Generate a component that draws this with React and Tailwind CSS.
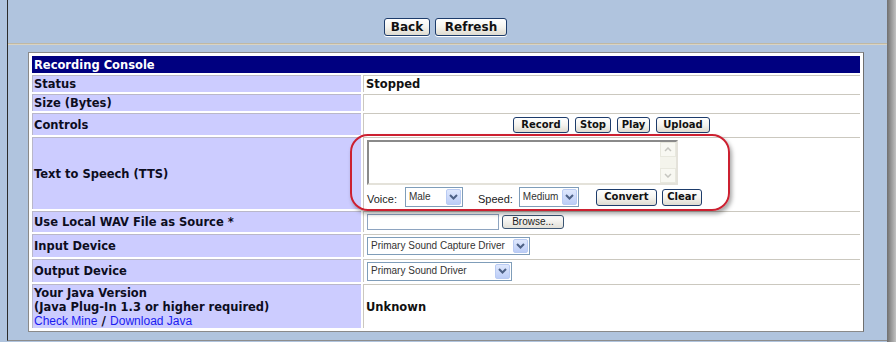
import React from "react";

const verdana = "font-['DejaVu_Sans',Verdana,sans-serif]";
const arial = "font-['Liberation_Sans',Arial,sans-serif]";

function XpButton({ children, className = "" }) {
  return (
    <div
      className={`flex items-center justify-center rounded-[3px] border border-[#1d3c6b] bg-linear-to-b from-white via-[#f5f4ef] to-[#dedbd0] font-bold leading-none text-[#111] shadow-[0_1px_0_#ffffff] ${verdana} ${className}`}
    >
      {children}
    </div>
  );
}

function Chevron({ color = "#4d6185" }) {
  return (
    <svg width="9" height="6" viewBox="0 0 9 6">
      <polyline points="1,1 4.5,4.5 8,1" fill="none" stroke={color} strokeWidth="2" />
    </svg>
  );
}

function XpSelect({ value, width, height = 19 }) {
  return (
    <div
      className={`flex items-stretch border border-[#7f9db9] bg-white ${arial}`}
      style={{ width, height }}
    >
      <span className="flex flex-1 items-center overflow-hidden whitespace-nowrap pl-[3px] text-[10px] leading-none text-[#333]">
        {value}
      </span>
      <span className="m-px flex w-[15px] items-center justify-center rounded-[2px] border border-[#b9cbf3] bg-linear-to-b from-[#dfe8fd] to-[#bccdf7]">
        <Chevron />
      </span>
    </div>
  );
}

function Label({ children, h }) {
  return (
    <td
      className={`border-l border-t border-[#b9b7c9] bg-[#ccccff] p-0 pl-[1px] text-[11.5px] font-bold leading-[14px] text-[#0d0d1e] ${verdana}`}
      style={{ height: h }}
    >
      {children}
    </td>
  );
}

function Value({ children, h, className = "" }) {
  return (
    <td
      className={`border-l border-t border-[#cbc8bf] bg-white p-0 pl-[2px] leading-[14px] ${className}`}
      style={{ height: h }}
    >
      {children}
    </td>
  );
}

function TextArea() {
  return (
    <div className="flex h-[45px] w-[311px] border-2 border-b-[#e4e2da] border-l-[#8a8a8a] border-r-[#e4e2da] border-t-[#8a8a8a] bg-white">
      <div className="flex-1" />
      <div className="flex w-[16px] flex-col justify-between bg-[#f4f4ec]">
        <div className="flex h-[15px] items-center justify-center border border-[#e8e8de] bg-[#f8f8f2]">
          <svg width="8" height="5" viewBox="0 0 8 5">
            <polyline points="1,4 4,1 7,4" fill="none" stroke="#c6c6c0" strokeWidth="1.5" />
          </svg>
        </div>
        <div className="flex h-[15px] items-center justify-center border border-[#e8e8de] bg-[#f8f8f2]">
          <svg width="8" height="5" viewBox="0 0 8 5">
            <polyline points="1,1 4,4 7,1" fill="none" stroke="#c6c6c0" strokeWidth="1.5" />
          </svg>
        </div>
      </div>
    </div>
  );
}

export default function App() {
  return (
    <div className="relative flex h-[342px] w-[896px] overflow-hidden bg-[#b0c4de]">
      <div className="w-[7px]" />
      <div className="flex h-[341px] w-[880px] flex-col border-b border-l border-b-[#8d8d8d] border-l-[#2b2b2b]">
        <div className="flex h-[43px] gap-[5px] pl-[376px] pt-[18px]">
          <XpButton className="h-[18px] w-[46px] text-[12px]">Back</XpButton>
          <XpButton className="h-[18px] w-[72px] text-[12px]">Refresh</XpButton>
        </div>
        <div className="border-b border-t border-b-[#d9d3c2] border-t-[#bfb8a4]" />

        <div className="ml-[20px] mt-[7px] w-[836px] border border-[#8a8a8a] border-r-[#6f6f6f] bg-white p-px">
          <table className="w-[832px] table-fixed border-separate border-spacing-[2px]">
            <colgroup>
              <col className="w-[329px]" />
              <col />
            </colgroup>
            <tbody>
              <tr>
                <td
                  colSpan={2}
                  className={`h-[17px] bg-[#000080] p-0 pl-[2px] text-[11.5px] font-bold leading-[14px] text-white ${verdana}`}
                >
                  Recording Console
                </td>
              </tr>
              <tr>
                <Label h={17}>Status</Label>
                <Value h={17} className={`text-[11.5px] font-bold text-[#111] ${verdana}`}>
                  Stopped
                </Value>
              </tr>
              <tr>
                <Label h={17}>Size (Bytes)</Label>
                <Value h={17} />
              </tr>
              <tr>
                <Label h={22}>Controls</Label>
                <Value h={22}>
                  <div className="flex justify-center gap-[6px] pr-[3px] text-[10px]">
                    <XpButton className="h-[16px] w-[56px]">Record</XpButton>
                    <XpButton className="h-[16px] w-[36px]">Stop</XpButton>
                    <XpButton className="h-[16px] w-[33px]">Play</XpButton>
                    <XpButton className="h-[16px] w-[54px]">Upload</XpButton>
                  </div>
                </Value>
              </tr>
              <tr>
                <Label h={72}>Text to Speech (TTS)</Label>
                <Value h={72} className="pt-[2px] align-top">
                  <div className="pl-[1px]">
                    <TextArea />
                    <div className={`mt-[2px] flex items-center text-[11px] text-[#222] ${arial}`}>
                      <span className="pt-[4px]">Voice:</span>
                      <span className="ml-[8px]">
                        <XpSelect value="Male" width={58} height={20} />
                      </span>
                      <span className="ml-[15px] pt-[4px]">Speed:</span>
                      <span className="ml-[6px]">
                        <XpSelect value="Medium" width={60} height={20} />
                      </span>
                      <XpButton className="ml-[17px] h-[17px] w-[61px] text-[10px]">Convert</XpButton>
                      <XpButton className="ml-[5px] h-[17px] w-[40px] text-[10px]">Clear</XpButton>
                    </div>
                  </div>
                </Value>
              </tr>
              <tr>
                <Label h={21}>Use Local WAV File as Source *</Label>
                <Value h={21}>
                  <div className="flex items-center gap-[3px] pl-px">
                    <div className="h-[16px] w-[132px] border border-[#8ea4c0] bg-white" />
                    <div
                      className={`flex h-[14px] w-[62px] items-center justify-center rounded-[3px] border border-[#3b5573] bg-linear-to-b from-white to-[#e2e0d8] text-[10px] text-[#222] ${arial}`}
                    >
                      Browse...
                    </div>
                  </div>
                </Value>
              </tr>
              <tr>
                <Label h={23}>Input Device</Label>
                <Value h={23}>
                  <div className="pl-px">
                    <XpSelect value="Primary Sound Capture Driver" width={163} height={18} />
                  </div>
                </Value>
              </tr>
              <tr>
                <Label h={23}>Output Device</Label>
                <Value h={23}>
                  <div className="pl-px">
                    <XpSelect value="Primary Sound Driver" width={145} height={19} />
                  </div>
                </Value>
              </tr>
              <tr>
                <Label h={44}>
                  <div>
                    <div>Your Java Version</div>
                    <div>(Java Plug-In 1.3 or higher required)</div>
                    <div className="text-[12px] font-normal">
                      <span className={`text-[#1b1bf0] ${arial}`}>Check Mine</span>
                      <span className="font-bold"> / </span>
                      <span className={`text-[#1b1bf0] ${arial}`}>Download Java</span>
                    </div>
                  </div>
                </Label>
                <Value h={44} className={`text-[11.5px] font-bold text-[#111] ${verdana}`}>
                  Unknown
                </Value>
              </tr>
            </tbody>
          </table>
        </div>
      </div>
      <div className="h-full w-[9px] bg-linear-to-r from-[#6f6f6f] via-[#9a9a9a] to-[#c2c2c2]" />

      <div className="absolute left-[350px] top-[134px] h-[77px] w-[380px] rounded-[18px] border-2 border-[#cc2030] shadow-[2px_3px_4px_rgba(0,0,0,0.35)]" />
    </div>
  );
}
